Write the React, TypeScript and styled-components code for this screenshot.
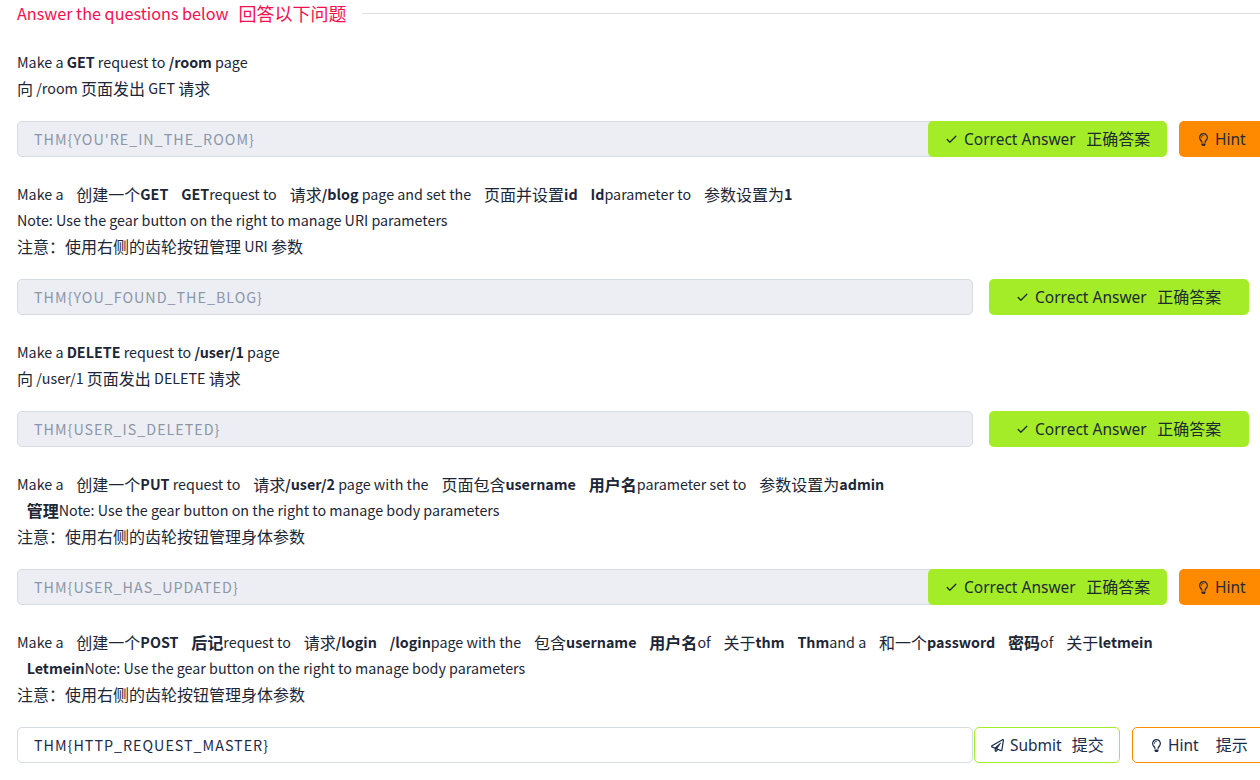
import React from "react";
import styled, { createGlobalStyle } from "styled-components";
import { FaRegLightbulb, FaRegPaperPlane } from "react-icons/fa";
import { Check } from "lucide-react";

const Global = createGlobalStyle`
  html, body { margin: 0; padding: 0; background: #fff; overflow: hidden; }
`;

const Page = styled.div`
  width: 1260px;
  height: 780px;
  overflow: hidden;
  padding: 0 0 0 17px;
  box-sizing: border-box;
  font-family: "Noto Sans CJK SC", "Noto Sans", sans-serif;
  font-size: 14.3px;
  color: #1c2636;
`;

const Heading = styled.div`
  display: flex;
  align-items: center;
  height: 25px;
  font-size: 16.2px;
  color: #f4104f;
  white-space: pre;
  &::after {
    content: "";
    flex: 1;
    height: 1px;
    margin: 1px 0 0 16px;
    background: #dcdfe5;
  }
`;

const HeadingZh = styled.span`
  margin-left: 10px;
  font-size: 18px;
`;

const Question = styled.p`
  margin: 24px 0 20px;
  line-height: 26px;
  white-space: nowrap;
  b { font-weight: 700; }
`;

const Zh = styled.span`
  font-size: 16px;
  line-height: 0;
  vertical-align: -1px;
`;

const T = styled.span`
  margin-left: 9.7px;
`;

const Row = styled.div`
  display: flex;
  height: 36px;
  width: 1300px;
`;

const Flag = styled.div<{ $filled?: boolean }>`
  flex: 0 0 956px;
  box-sizing: border-box;
  height: 36px;
  display: flex;
  align-items: center;
  padding: 0 16px 2px;
  border: 1px solid #d5dae3;
  border-radius: 5px;
  font-size: 14.3px;
  letter-spacing: 1px;
  color: ${(p) => (p.$filled ? "#1c2b4b" : "#8b96a8")};
  background: ${(p) => (p.$filled ? "#fff" : "#eceef3")};
`;

const Button = styled.div<{ $left: number; $width: number }>`
  flex: 0 0 ${(p) => p.$width}px;
  margin-left: ${(p) => p.$left}px;
  box-sizing: border-box;
  height: 36px;
  display: flex;
  align-items: center;
  justify-content: flex-start;
  border-radius: 5px;
  font-family: "Noto Sans", "Noto Sans CJK SC", sans-serif;
  font-size: 15.5px;
  line-height: 34px;
  white-space: pre;
  position: relative;
`;

const Correct = styled(Button)<{ $pad: number }>`
  background: #a3ec27;
  color: #1c2b33;
  padding-left: ${(p) => p.$pad}px;
`;

const HintSolid = styled(Button)`
  background: #ff8a00;
  color: #2a2a35;
  padding-left: 18px;
`;

const SubmitOutline = styled(Button)`
  border: 1px solid #a3ec27;
  color: #1c2b4b;
  padding-left: 16px;
`;

const HintOutline = styled(Button)`
  border: 1px solid #ff8a00;
  color: #1c2b4b;
  padding-left: 17px;
`;

const Label = styled.span<{ $gap: number }>`
  margin-left: ${(p) => p.$gap}px;
`;

const ButtonZh = styled.span<{ $gap: number }>`
  margin-left: ${(p) => p.$gap}px;
  font-size: 16px;
`;

const CheckIcon = () => <Check size={13} strokeWidth={2.4} />;
const Bulb = () => <FaRegLightbulb size={13} />;

const CorrectButton = ({ left, width, pad }: { left: number; width: number; pad: number }) => (
  <Correct $left={left} $width={width} $pad={pad}>
    <CheckIcon />
    <Label $gap={6}>Correct Answer</Label>
    <ButtonZh $gap={10.5}>正确答案</ButtonZh>
  </Correct>
);

const SolidHint = () => (
  <HintSolid $left={12} $width={100}>
    <Bulb />
    <Label $gap={5}>Hint</Label>
  </HintSolid>
);

export default function App() {
  return (
    <Page>
      <Global />
      <Heading>Answer the questions below<HeadingZh>回答以下问题</HeadingZh></Heading>

      <Question>
        Make a <b>GET</b> request to <b>/room</b> page
        <br /><Zh>向</Zh> /room <Zh>页面发出</Zh> GET <Zh>请求</Zh>
      </Question>
      <Row>
        <Flag>THM{"{YOU'RE_IN_THE_ROOM}"}</Flag>
        <CorrectButton left={-45} width={239} pad={17} />
        <SolidHint />
      </Row>

      <Question>
        Make a <T><Zh>创建一个</Zh></T><b>GET</b> <T><b>GET</b></T>request to <T><Zh>请求</Zh></T><b>/blog</b> page and set the <T><Zh>页面并设置</Zh></T><b>id</b> <T><b>Id</b></T>parameter to <T><Zh>参数设置为</Zh></T><b>1</b>
        <br />Note: Use the gear button on the right to manage URI parameters
        <br /><Zh>注意：使用右侧的齿轮按钮管理</Zh> URI <Zh>参数</Zh>
      </Question>
      <Row>
        <Flag>THM{"{YOU_FOUND_THE_BLOG}"}</Flag>
        <CorrectButton left={16} width={260} pad={27} />
      </Row>

      <Question>
        Make a <b>DELETE</b> request to <b>/user/1</b> page
        <br /><Zh>向</Zh> /user/1 <Zh>页面发出</Zh> DELETE <Zh>请求</Zh>
      </Question>
      <Row>
        <Flag>THM{"{USER_IS_DELETED}"}</Flag>
        <CorrectButton left={16} width={260} pad={27} />
      </Row>

      <Question>
        Make a <T><Zh>创建一个</Zh></T><b>PUT</b> request to <T><Zh>请求</Zh></T><b>/user/2</b> page with the <T><Zh>页面包含</Zh></T><b>username</b> <T><b><Zh>用户名</Zh></b></T>parameter set to <T><Zh>参数设置为</Zh></T><b>admin</b>
        <br /><T><b><Zh>管理</Zh></b></T>Note: Use the gear button on the right to manage body parameters
        <br /><Zh>注意：使用右侧的齿轮按钮管理身体参数</Zh>
      </Question>
      <Row>
        <Flag>THM{"{USER_HAS_UPDATED}"}</Flag>
        <CorrectButton left={-45} width={239} pad={17} />
        <SolidHint />
      </Row>

      <Question>
        Make a <T><Zh>创建一个</Zh></T><b>POST</b> <T><b><Zh>后记</Zh></b></T>request to <T><Zh>请求</Zh></T><b>/login</b> <T><b>/login</b></T>page with the <T><Zh>包含</Zh></T><b>username</b> <T><b><Zh>用户名</Zh></b></T>of <T><Zh>关于</Zh></T><b>thm</b> <T><b>Thm</b></T>and a <T><Zh>和一个</Zh></T><b>password</b> <T><b><Zh>密码</Zh></b></T>of <T><Zh>关于</Zh></T><b>letmein</b>
        <br /><T><b>Letmein</b></T>Note: Use the gear button on the right to manage body parameters
        <br /><Zh>注意：使用右侧的齿轮按钮管理身体参数</Zh>
      </Question>
      <Row>
        <Flag $filled>THM{"{HTTP_REQUEST_MASTER}"}</Flag>
        <SubmitOutline $left={1} $width={146}>
          <FaRegPaperPlane size={13} />
          <Label $gap={6}>Submit</Label>
          <ButtonZh $gap={10}>提交</ButtonZh>
        </SubmitOutline>
        <HintOutline $left={12} $width={140}>
          <Bulb />
          <Label $gap={5}>Hint</Label>
          <ButtonZh $gap={17}>提示</ButtonZh>
        </HintOutline>
      </Row>
    </Page>
  );
}
